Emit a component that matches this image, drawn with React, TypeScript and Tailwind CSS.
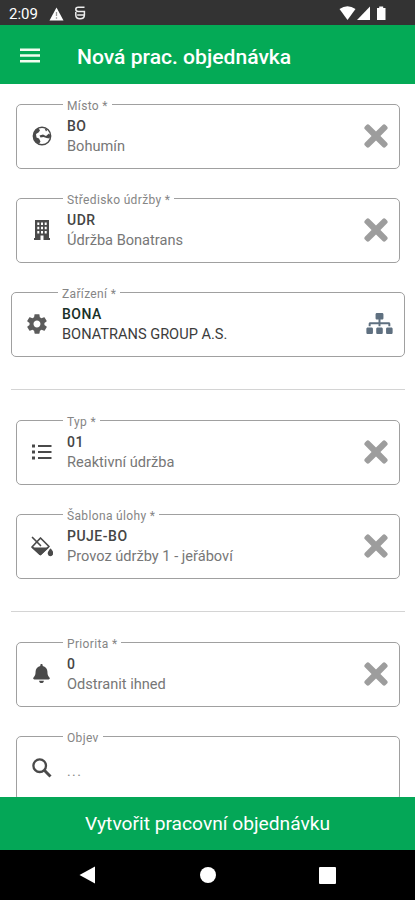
import { ReactNode } from "react";
import clsx from "clsx";
import { FaBell, FaSitemap, FaTimes } from "react-icons/fa";
import { IoMdSettings } from "react-icons/io";

type FieldProps = {
  label: string;
  icon: ReactNode;
  code?: string;
  text: string;
  wide?: boolean;
};

function Field({ label, icon, code, text, wide }: FieldProps) {
  return (
    <div
      className={clsx(
        "relative flex h-[65px] shrink-0 rounded-[5px] border border-[#a0a0a0]",
        wide ? "-mx-[5px]" : ""
      )}
    >
      <span className="absolute left-[46px] -top-[6px] bg-white px-1 text-[12px] leading-[14px] tracking-[0.35px] text-[#858585]">
        {label}
      </span>
      <div className="flex w-[49px] items-center justify-center pb-px text-[#4a4a4a]">
        {icon}
      </div>
      {code ? (
        <div
          className={clsx(
            "ml-px flex-1 pt-[11px] leading-5",
            wide ? "text-[#3c3c3c]" : "text-[#777]"
          )}
        >
          <p
            className={clsx(
              "text-[14px] leading-5 font-medium tracking-[0.5px]",
              wide ? "text-[#183028]" : "text-[#454545]"
            )}
          >
            {code}
          </p>
          <p className="text-[14.6px] leading-5">{text}</p>
        </div>
      ) : (
        <p className="ml-px flex-1 pt-[24px] text-[14px] leading-5 tracking-[1.4px] text-[#888]">
          {text}
        </p>
      )}
      {code && (
        <div className="flex w-[46px] items-center justify-center pb-px">
          {wide ? (
            <FaSitemap className="mr-[3px] mb-[2px] h-[21px] w-[27px] text-[#5f7080]" />
          ) : (
            <FaTimes className="h-[34px] w-[34px] text-[#9d9d9d]" />
          )}
        </div>
      )}
    </div>
  );
}

function GlobeIcon() {
  return (
    <svg width="20" height="20" viewBox="0 0 20 20" fill="currentColor">
      <circle cx="10" cy="10" r="8.700" fill="none" stroke="currentColor" strokeWidth="1.400" />
      <path d="M6.500 2Q1.500 4.500 1.300 10Q2 16 7 18L8.500 15.500L7 12.500L4.500 11.500L4 8L6.500 6.500L8 4.500Z" />
      <path d="M12.500 2.200L15.500 3.800L14 5.500ZM7.500 9.500L11 8.500L14 10L17 7.500L18.500 9.500L17.500 12.500L14.500 12L11.500 11L8.500 11.500Z" />
    </svg>
  );
}

function BuildingIcon() {
  return (
    <svg width="16" height="20" viewBox="0 0 16 20" fill="currentColor">
      <path
        fillRule="evenodd"
        d="M1 0H15V18H16V20H9.500V15.500H6.500V20H0V18H1ZM3.300 2.500V5H5.300V2.500ZM7 2.500V5H9V2.500ZM10.700 2.500V5H12.700V2.500ZM3.300 6.700V9.200H5.300V6.700ZM7 6.700V9.200H9V6.700ZM10.700 6.700V9.200H12.700V6.700ZM3.300 10.900V13.400H5.300V10.900ZM7 10.900V13.400H9V10.900ZM10.700 10.900V13.400H12.700V10.900Z"
      />
    </svg>
  );
}

function ListIcon() {
  return (
    <svg width="20" height="16" viewBox="0 0 20 16" fill="currentColor">
      <path d="M0 0.500h3v3H0zM0 6.500h3v3H0zM0 12.500h3v3H0zM6 1h13.500v2H6zM6 7h13.500v2H6zM6 13h13.500v2H6z" />
    </svg>
  );
}

function FillIcon() {
  return (
    <svg
      width="23"
      height="21"
      viewBox="0 0 23 21"
      fill="none"
      stroke="currentColor"
      strokeWidth="1.700"
      strokeLinejoin="round"
    >
      <path d="M2 11L10.500 2L19 10.500L10.500 18.500Z" />
      <path d="M2 11.500H19L11 19H9.500Z" fill="currentColor" stroke="none" />
      <path d="M2.500 1.500L10.500 9.500" strokeLinecap="round" />
      <path
        d="M20.500 13.500Q22.800 16.300 22.400 17.700Q21.800 19.300 20.500 19.300Q19 19.300 18.600 17.700Q18.400 16.300 20.500 13.500Z"
        fill="currentColor"
      />
    </svg>
  );
}

function SearchIcon() {
  return (
    <svg width="20" height="20" viewBox="0 0 20 20" fill="none" stroke="currentColor">
      <circle cx="7.700" cy="7.700" r="6.300" strokeWidth="2.300" />
      <path d="M12.300 12.300L18.500 18.500" strokeWidth="3" />
    </svg>
  );
}

function StatusBar() {
  return (
    <div className="flex h-[25px] shrink-0 items-center bg-[#333] pl-[9px] text-white">
      <span className="w-[40px] pt-[3px] text-[15px] leading-none">2:09</span>
      <svg width="15" height="14" viewBox="0 0 15 14" className="mt-[2px]">
        <path d="M7.5 0.5 L14.5 13.5 H0.5 Z" fill="#fff" />
        <path d="M7.5 5v4M7.5 10.3v1.4" stroke="#999" strokeWidth="1.3" />
      </svg>
      <svg
        width="12"
        height="14"
        viewBox="0 0 12 14"
        className="ml-[10px]"
        fill="none"
        stroke="#eee"
        strokeWidth="1.5"
      >
        <path d="M10.500 1.200H4.200Q1.800 1.200 1.800 3.300Q1.800 5.400 4.200 5.400H10.400V9Q10.400 12.800 6 12.800Q1.800 12.800 1.800 9V6M3.200 9H10" />
      </svg>
      {/* wifi, signal, battery */}
      <svg width="50" height="16" viewBox="0 0 50 16" className="ml-auto mr-[26px]" fill="#fff">
        <path d="M0.500 4Q8.500 -1.500 16.500 4L8.500 15Z" />
        <path d="M31 1.500V15H18Z" />
        <path d="M38 3H40.200V1.500H44.200V3H46.500V15H38Z" />
      </svg>
    </div>
  );
}

export default function App() {
  return (
    <div className="flex h-[900px] w-[415px] flex-col overflow-hidden bg-white font-[Roboto,sans-serif]">
      <StatusBar />

      {/* header */}
      <header className="flex h-[59px] shrink-0 items-center bg-[#04aa56] pt-1 pl-5 text-white">
        <svg width="20" height="15" viewBox="0 0 20 15" className="-mt-[2px]" fill="#f2fdf0">
          <path d="M0 0.500h20v2.600H0zM0 6.200h20v2.600H0zM0 11.900h20v2.600H0z" />
        </svg>
        <h1 className="ml-[37px] pt-px text-[21.1px] font-medium">
          Nová prac. objednávka
        </h1>
      </header>

      {/* form */}
      <main className="flex min-h-0 flex-1 flex-col overflow-hidden pt-5 pr-[15px] pl-4">
        <div className="flex flex-col gap-[29px]">
          <Field label="Místo *" icon={<GlobeIcon />} code="BO" text="Bohumín" />
          <Field
            label="Středisko údržby *"
            icon={<BuildingIcon />}
            code="UDR"
            text="Údržba Bonatrans"
          />
          <Field
            label="Zařízení *"
            icon={<IoMdSettings size={24} className="mb-px text-[#5c5c5c]" />}
            code="BONA"
            text="BONATRANS GROUP A.S."
            wide
          />
        </div>
        <hr className="-mx-[5px] mt-8 mb-[30px] border-[#d4d4d4]" />
        <div className="flex flex-col gap-[29px]">
          <Field label="Typ *" icon={<ListIcon />} code="01" text="Reaktivní údržba" />
          <Field
            label="Šablona úlohy *"
            icon={<FillIcon />}
            code="PUJE-BO"
            text="Provoz údržby 1 - jeřáboví"
          />
        </div>
        <hr className="-mx-[5px] mt-8 mb-[30px] border-[#d4d4d4]" />
        <div className="flex flex-col gap-[29px]">
          <Field
            label="Priorita *"
            icon={<FaBell size={19} className="mb-[2px]" />}
            code="0"
            text="Odstranit ihned"
          />
          <Field label="Objev" icon={<SearchIcon />} text="..." />
        </div>
      </main>

      <button className="h-[53px] shrink-0 bg-[#04a757] pt-px text-[19.2px] text-white">
        Vytvořit pracovní objednávku
      </button>

      {/* system navigation */}
      <nav className="flex h-[50px] shrink-0 items-center justify-between bg-black px-[79px]">
        <svg width="17" height="18" viewBox="0 0 17 18" fill="#fff">
          <path d="M0.500 9L16 0.500V17.500Z" />
        </svg>
        <div className="h-4 w-4 rounded-full bg-white" />
        <div className="h-[17px] w-[17px] rounded-[1px] bg-white" />
      </nav>
    </div>
  );
}
